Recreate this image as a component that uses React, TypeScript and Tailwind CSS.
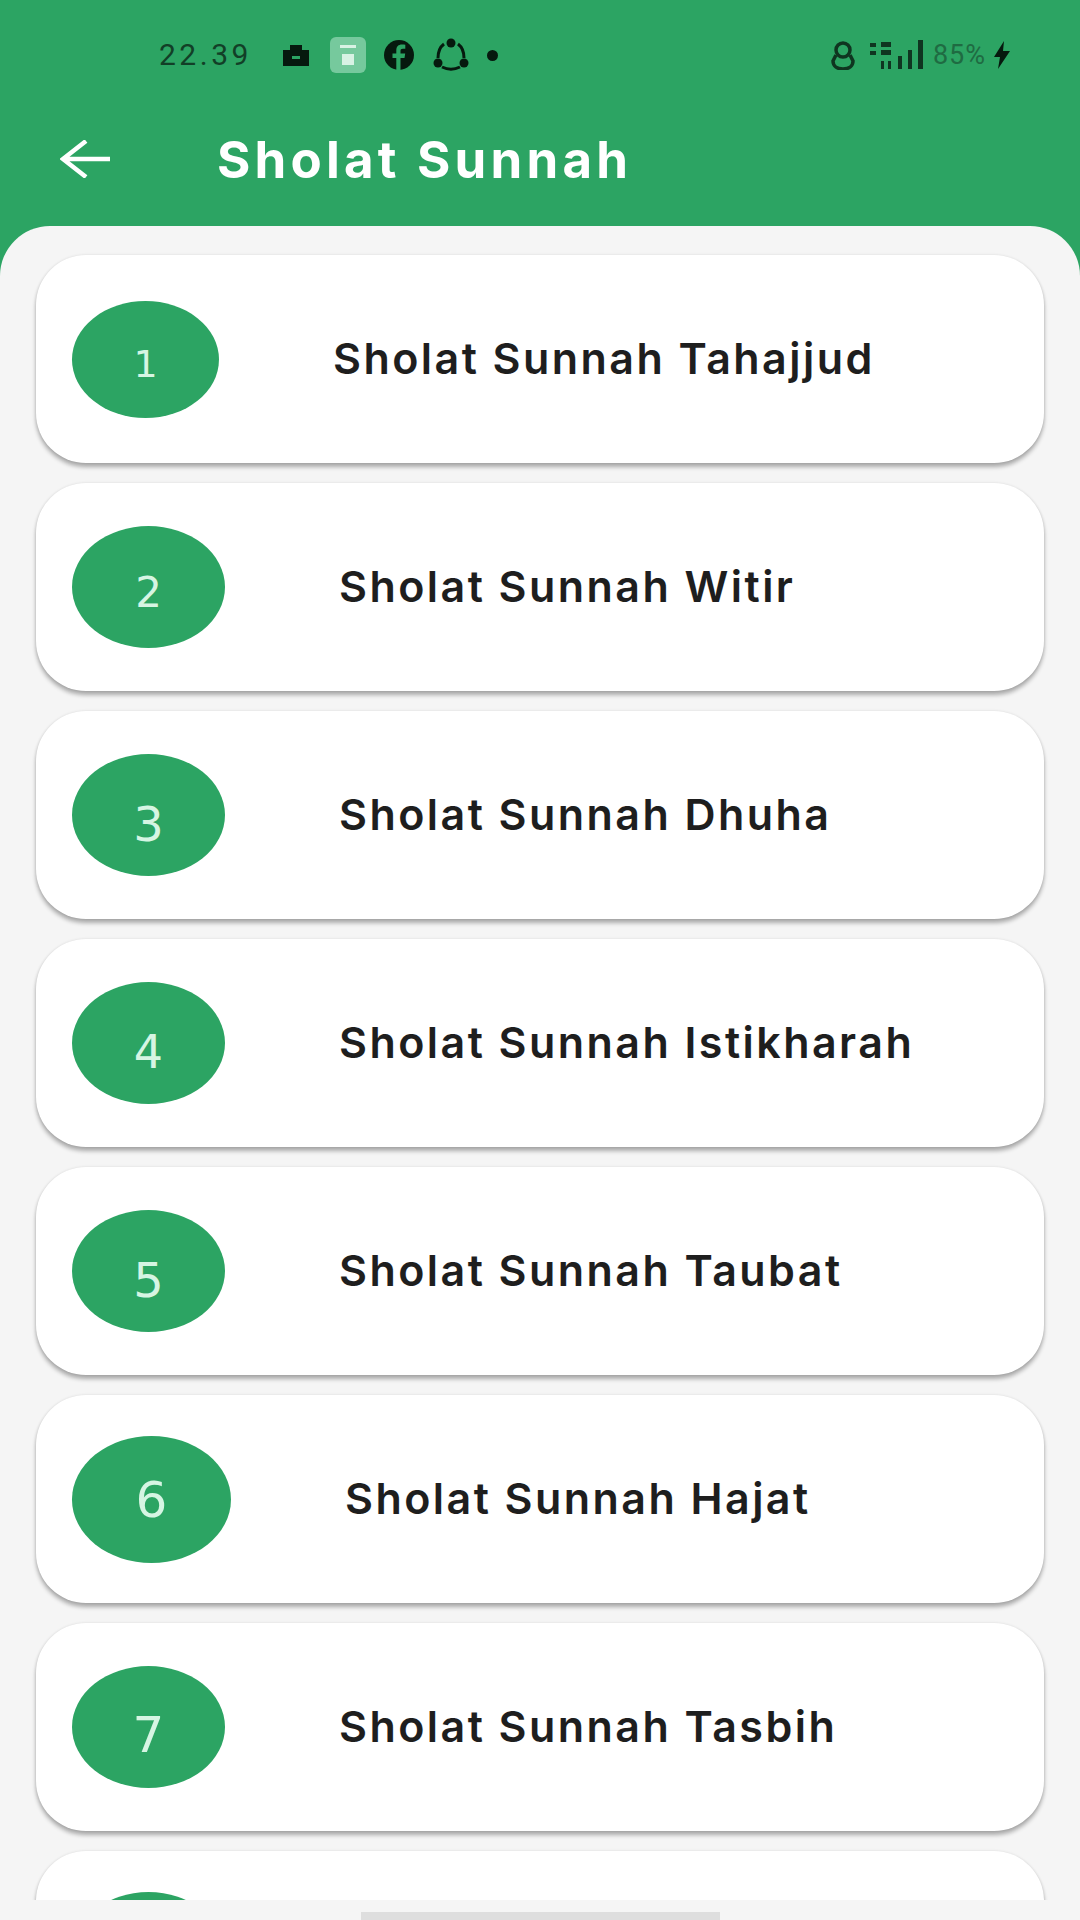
const items = [
  { n: '1', title: 'Sholat Sunnah Tahajjud', circle: 'w-[147px] h-[117px]', digit: 'text-[38px] pt-[9px]' },
  { n: '2', title: 'Sholat Sunnah Witir', circle: 'w-[153px] h-[122px]', digit: 'text-[42px] pt-[11px]' },
  { n: '3', title: 'Sholat Sunnah Dhuha', circle: 'w-[153px] h-[122px]', digit: 'text-[48px] pt-[17px]' },
  { n: '4', title: 'Sholat Sunnah Istikharah', circle: 'w-[153px] h-[122px]', digit: 'text-[46px] pt-[17px]' },
  { n: '5', title: 'Sholat Sunnah Taubat', circle: 'w-[153px] h-[122px]', digit: 'text-[48px] pt-[18px]' },
  { n: '6', title: 'Sholat Sunnah Hajat', circle: 'w-[159px] h-[127px]', digit: 'text-[50px] pt-[2px]' },
  { n: '7', title: 'Sholat Sunnah Tasbih', circle: 'w-[153px] h-[122px]', digit: 'text-[50px] pt-[16px]' },
  // only the top of the eighth card is on screen, its text falls below the fold
  { n: '', title: '', circle: 'w-[153px] h-[126px]', digit: '' },
];

function StatusBar() {
  return (
    <div className="h-[110px] pt-[40px] pl-[159px] pr-[68px] flex items-start justify-between text-[#123f27]">
      <div className="h-[30px] flex items-center">
        <span className="text-[30px] leading-none tracking-[3.5px] font-['Roboto',sans-serif]">22.39</span>
        <svg className="ml-[30px]" width="28" height="24" viewBox="0 0 28 24">
          <path d="M1 7h26v16H1zM8 7V2h12v5" fill="#06190e" />
          <rect x="10" y="13" width="8" height="3" fill="#2ca463" />
        </svg>
        <svg className="ml-[20px]" width="36" height="36" viewBox="0 0 36 36">
          <rect width="36" height="36" rx="6" fill="#76c99d" />
          <rect x="10" y="8" width="16" height="3" fill="#d8f2e4" />
          <rect x="12" y="17" width="12" height="11" fill="#d8f2e4" />
        </svg>
        <svg className="ml-[18px]" width="30" height="30" viewBox="0 0 30 30">
          <circle cx="15" cy="15" r="15" fill="#06190e" />
          <path d="M16.500 30V18h4l.7-4.500h-4.700V11c0-1.500.6-2.300 2.400-2.300h2.400V4.800c-1-.2-2.200-.3-3.400-.3-3.500 0-5.600 2.100-5.600 5.800v3.200H8.500V18h3.800v12z" fill="#2ca463" />
        </svg>
        <svg className="ml-[19px]" width="36" height="36" viewBox="0 0 36 36" fill="none" stroke="#06190e" strokeWidth="3">
          <path d="M11 7C7 10 5 15 5 21M25 7c4 3 6 8 6 14M9 30c6 3 12 3 18 0" />
          <circle cx="18" cy="6" r="4.500" fill="#06190e" stroke="none" />
          <circle cx="5" cy="26" r="4.500" fill="#06190e" stroke="none" />
          <circle cx="31" cy="26" r="4.500" fill="#06190e" stroke="none" />
        </svg>
        <span className="ml-[18px] w-[11px] h-[11px] rounded-full bg-[#06190e]" />
      </div>
      <div className="h-[30px] flex items-center">
        <svg width="26" height="30" viewBox="0 0 26 30" fill="none" stroke="#0f3520" strokeWidth="3.500">
          <circle cx="13" cy="10" r="7" />
          <path d="M6 15 3 21c0 5 4 8 10 8s10-3 10-8l-3-6" />
        </svg>
        <svg className="ml-[14px]" width="58" height="30" viewBox="0 0 58 30" fill="#0f3520">
          <rect x="0" y="3" width="6" height="4" />
          <rect x="0" y="11" width="6" height="4" />
          <rect x="11" y="2" width="10" height="5" />
          <rect x="11" y="10" width="10" height="5" />
          <rect x="11" y="21" width="3" height="8" />
          <rect x="18" y="21" width="3" height="8" />
          <rect x="28" y="16" width="4" height="13" />
          <rect x="38" y="10" width="4" height="19" />
          <rect x="48" y="0" width="5" height="29" />
        </svg>
        <span className="ml-[5px] text-[27px] leading-none tracking-[1px] text-[#1f6b42] font-['Roboto',sans-serif]">85%</span>
        <svg className="ml-[6px]" width="20" height="28" viewBox="0 0 20 28">
          <path d="M12 0 2 16h6l-2 12 12-18h-7z" fill="#06190e" />
        </svg>
      </div>
    </div>
  );
}

function SholatCard({ n, title, circle, digit }: { n: string; title: string; circle: string; digit: string }) {
  return (
    <div className="shrink-0 h-[208px] rounded-[50px] bg-white pl-[36px] flex items-center shadow-[0_4px_4px_rgba(0,0,0,0.3),0_0_3px_rgba(0,0,0,0.1)]">
      <div className={`${circle} shrink-0 rounded-[50%] bg-[#2ca463] flex items-center justify-center`}>
        {n && <span className={`${digit} leading-none text-[#d6f5e3] font-['DejaVu_Sans',sans-serif]`}>{n}</span>}
      </div>
      {title && (
        <span className="ml-[114px] mb-[2px] text-[43px] leading-none font-semibold tracking-[2.45px] text-[#1e1e1e] font-['Inter',sans-serif]">
          {title}
        </span>
      )}
    </div>
  );
}

export default function App() {
  return (
    <div className="w-[1080px] h-[1920px] overflow-hidden flex flex-col bg-[#2ca463]">
      <StatusBar />
      <div className="h-[116px] flex items-start pl-[60px] text-white">
        <svg className="mt-[30px] shrink-0" width="50" height="38" viewBox="0 0 50 38" fill="none" stroke="currentColor" strokeWidth="4.500">
          <path d="M50 19H3M26 1 3 19l23 18" />
        </svg>
        <span className="ml-[107px] mt-[24px] text-[51px] leading-none font-bold tracking-[4.2px] font-['Inter',sans-serif]">Sholat Sunnah</span>
      </div>
      <div className="flex-1 min-h-0 rounded-t-[50px] bg-[#f5f5f5] flex flex-col">
        <div className="flex-1 min-h-0 overflow-hidden px-[36px] pt-[29px] flex flex-col gap-[20px]">
          {items.map((item, i) => (
            <SholatCard key={i} {...item} />
          ))}
        </div>
        <div className="h-[20px] flex justify-center pt-[12px]">
          <div className="w-[359px] h-[8px] bg-[#dedede]" />
        </div>
      </div>
    </div>
  );
}
